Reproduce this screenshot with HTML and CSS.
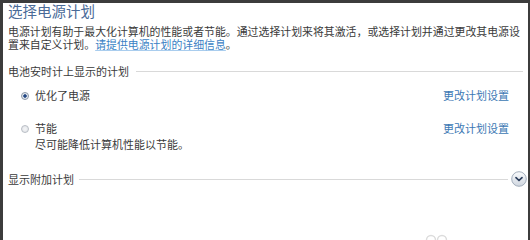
FILE: index.html
```html
<!DOCTYPE html>
<html lang="zh-CN">
<head>
<meta charset="utf-8">
<title>选择电源计划</title>
<link rel="stylesheet" href="styles.css">
</head>
<body>
<div class="panel">
  <h1 class="title">选择电源计划</h1>
  <p class="desc"><span class="line">电源计划有助于最大化计算机的性能或者节能。通过选择计划来将其激活，或选择计划并通过更改其电源设</span><br>置来自定义计划。<a class="link" href="#">请提供电源计划的详细信息</a>。</p>

  <div class="section-head"><span>电池安时计上显示的计划</span></div>

  <div class="option first">
    <span class="radio checked"></span>
    <span class="opt-label">优化了电源</span>
    <a class="opt-link" href="#">更改计划设置</a>
  </div>

  <div class="option second">
    <span class="radio"></span>
    <span class="opt-label">节能</span>
    <a class="opt-link" href="#">更改计划设置</a>
  </div>
  <div class="opt-desc">尽可能降低计算机性能以节能。</div>

  <div class="more-row">
    <span class="more-label">显示附加计划</span>
    <span class="more-line"></span>
    <span class="expand">
      <svg width="16" height="16" viewBox="0 0 16 16">
        <defs>
          <linearGradient id="g" x1="0" y1="0" x2="0" y2="1">
            <stop offset="0" stop-color="#fbfcfd"/>
            <stop offset="0.5" stop-color="#e4e8ee"/>
            <stop offset="1" stop-color="#cfd6df"/>
          </linearGradient>
        </defs>
        <circle cx="8" cy="8" r="7.3" fill="url(#g)" stroke="#9aa6b4" stroke-width="0.9"/>
        <path d="M5 6.6 L8 9.5 L11 6.6" fill="none" stroke="#2c3e5c" stroke-width="1.7" stroke-linecap="round" stroke-linejoin="round"/>
      </svg>
    </span>
  </div>

  <svg class="watermark" width="24" height="10" viewBox="0 0 24 10">
    <circle cx="6" cy="8" r="4.5" fill="none" stroke="#dcdcdc" stroke-width="1.4"/>
    <circle cx="17" cy="8" r="4.5" fill="none" stroke="#dcdcdc" stroke-width="1.4"/>
  </svg>
</div>
</body>
</html>
```
FILE: styles.css
```css
html, body {
  margin: 0;
  padding: 0;
  background: #3c3c3c;
}
body {
  width: 530px;
  height: 240px;
  overflow: hidden;
  font-family: "Noto Sans CJK SC", "Noto Sans", sans-serif;
  color: #3a3a3a;
}
.panel {
  position: relative;
  margin: 3px 2px 0 3px;
  height: 237px;
  background: #ffffff;
  padding: 0 5px;
  box-sizing: border-box;
}
.title {
  margin: 0;
  font-size: 14.5px;
  font-weight: normal;
  line-height: 16px;
  color: #4a6b98;
}
.desc {
  margin: 6px 0 0 0;
  font-size: 10.9px;
  line-height: 13px;
  color: #3a3a3a;
}
.desc .line {
  white-space: nowrap;
}
.link {
  color: #3a7fc4;
  text-decoration: underline;
  text-decoration-color: #a9cdee;
}
.section-head {
  margin-top: 14px;
  display: flex;
  align-items: center;
  height: 13px;
  font-size: 11px;
  line-height: 13px;
}
.section-head::after {
  content: "";
  flex: 1;
  height: 1px;
  background: #d9d9d9;
  margin-left: 7px;
}
.option {
  display: flex;
  align-items: center;
  height: 13px;
  font-size: 11px;
  line-height: 13px;
  padding-left: 13px;
  padding-right: 14px;
}
.option.first {
  margin-top: 11px;
}
.option.second {
  margin-top: 20px;
}
.radio {
  width: 8px;
  height: 8px;
  border-radius: 50%;
  box-sizing: border-box;
  border: 1px solid #b9bec5;
  background: radial-gradient(circle, #f4f5f7 0, #dfe2e6 100%);
  margin-right: 6px;
  flex: none;
}
.radio.checked {
  border-color: #8a96a6;
  background: radial-gradient(circle, #1d3f78 0, #2a4f8c 35%, #dfe4ea 45%, #eef1f4 100%);
}
.opt-label {
  flex: 1;
  color: #3a3a3a;
}
.opt-link {
  color: #3c78b4;
  text-decoration: none;
}
.opt-desc {
  margin-top: 2px;
  padding-left: 27px;
  font-size: 11px;
  line-height: 14px;
  color: #3a3a3a;
}
.more-row {
  margin-top: 20px;
  margin-right: -4px;
  display: flex;
  align-items: center;
  height: 16px;
  font-size: 11px;
  line-height: 13px;
}
.more-label {
  flex: none;
}
.more-line {
  flex: 1;
  height: 1px;
  background: #d9d9d9;
  margin-left: 5px;
  margin-right: 3px;
}
.expand {
  width: 16px;
  height: 16px;
  display: block;
  flex: none;
}
.expand svg {
  display: block;
}
.watermark {
  position: absolute;
  left: 422px;
  top: 229px;
}
```
